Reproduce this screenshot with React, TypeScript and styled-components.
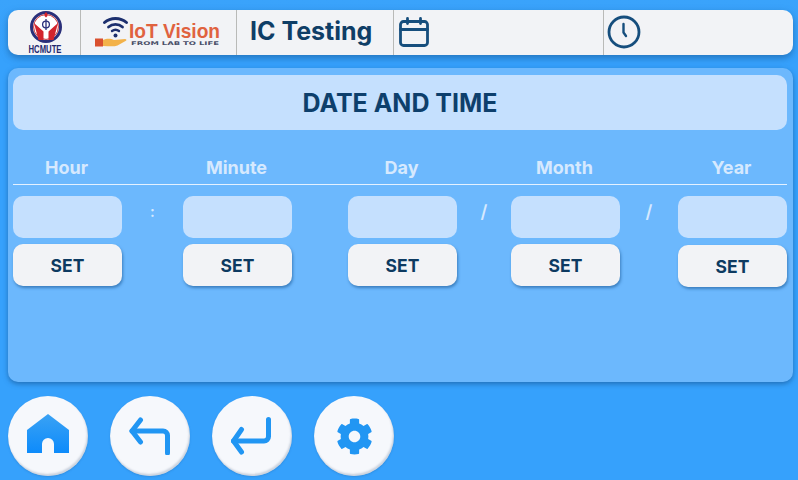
import React from "react";
import styled, { createGlobalStyle } from "styled-components";
import { FaCog } from "react-icons/fa";

const GlobalStyle = createGlobalStyle`
  html, body {
    margin: 0;
    padding: 0;
    background: #36a1fc;
    font-family: "Inter", "Liberation Sans", sans-serif;
  }
  * { box-sizing: border-box; }
`;

const fields = [
  { label: "Hour", sep: ":" },
  { label: "Minute", sep: "" },
  { label: "Day", sep: "/" },
  { label: "Month", sep: "/" },
  { label: "Year", sep: "" },
];

const HcmuteLogo = () => (
  <svg width="54" height="45" viewBox="-8 0 54 45">
    <circle cx="19" cy="17" r="14.500" fill="#fff" stroke="#2a2f7a" strokeWidth="3" />
    <circle cx="19" cy="17" r="12.400" fill="none" stroke="#c9343a" strokeWidth="1" />
    <path d="M7 13l9.500 8.500V30h-5zM31 13l-9.500 8.500V30h5z" fill="#d3242c" />
    <circle cx="19" cy="14.500" r="3.400" fill="none" stroke="#2a2f7a" strokeWidth="1.300" />
    <path d="M19 9v11" stroke="#2a2f7a" strokeWidth="1.300" />
    <path d="M19 2c-2.200 2-2.200 4 0 5.500 2.200-1.500 2.200-3.500 0-5.500z" fill="#d3242c" />
    <text x="18" y="42.500" textAnchor="middle" fontFamily="Liberation Sans, sans-serif" fontWeight="700" fontSize="10.500" textLength="33" lengthAdjust="spacingAndGlyphs" fill="#23286e">
      HCMUTE
    </text>
  </svg>
);

const IotLogo = () => (
  <svg width="148" height="36" viewBox="-10 0 148 36">
    <g fill="none" stroke="#1c2f6e" strokeLinecap="round">
      <path d="M9.500 7.500C15.500 2 25.500 2 31.500 7.500" strokeWidth="3" />
      <path d="M13.500 12c4-3.500 10-3.500 14 0" strokeWidth="2.800" />
      <path d="M17 16c2-1.500 5-1.500 7 0" strokeWidth="2.400" />
    </g>
    <circle cx="20.500" cy="20.500" r="2" fill="#1c2f6e" />
    <rect x="0" y="23.500" width="8" height="8" fill="#d9502f" />
    <path d="M8 25c4-2 8-1.500 11 0l11-1c1.500 0 2 1.500 .500 2l-8 4.500c-4 1.500-9 .500-14.500 .500z" fill="#f3b24a" />
    <text x="34" y="22.500" fontFamily="Liberation Sans, sans-serif" fontWeight="700" fontSize="20.500" textLength="91" lengthAdjust="spacingAndGlyphs" fill="#e0623f">
      IoT Vision
    </text>
    <text x="36" y="29.500" fontFamily="DejaVu Sans, sans-serif" fontWeight="700" fontSize="5" textLength="88" lengthAdjust="spacingAndGlyphs" fill="#4a4f68">
      FROM LAB TO LIFE
    </text>
  </svg>
);

const CalendarIcon = () => (
  <svg width="32" height="32" viewBox="0 0 32 32" fill="none" stroke="#164e7d" strokeWidth="2.800" strokeLinecap="round" strokeLinejoin="round">
    <rect x="2.500" y="5.500" width="27" height="24" rx="3" />
    <path d="M2.500 13.500h27M9.500 2.500v5M22.500 2.500v5" />
  </svg>
);

const ClockIcon = () => (
  <svg width="34" height="34" viewBox="0 0 34 34" fill="none" stroke="#164e7d" strokeLinecap="round" strokeLinejoin="round">
    <circle cx="17" cy="17" r="15" strokeWidth="2.800" />
    <path d="M16.500 9v8.500l2.500 3.500" strokeWidth="2.400" />
  </svg>
);

const HomeIcon = () => (
  <svg width="42" height="44" viewBox="0 0 42 44">
    <defs>
      <linearGradient id="homeFill" x1="0" y1="0" x2="0" y2="1">
        <stop offset="0" stopColor="#3aa2f4" />
        <stop offset="1" stopColor="#0d8bfb" />
      </linearGradient>
    </defs>
    <path d="M21 0L42 16v23H27V30a6 6 0 0 0-12 0v9H0V16z" fill="url(#homeFill)" />
  </svg>
);

const BackIcon = () => (
  <svg width="42" height="38" viewBox="0 0 42 38" fill="none" stroke="#2196f3" strokeWidth="5" strokeLinecap="round" strokeLinejoin="round">
    <path d="M11.500 3L3 14l8.500 11" />
    <path d="M3 14h31a4.500 4.500 0 0 1 4.500 4.500V36" />
  </svg>
);

const EnterIcon = () => (
  <svg width="42" height="38" viewBox="0 0 42 38" fill="none" stroke="#2196f3" strokeWidth="5" strokeLinecap="round" strokeLinejoin="round">
    <path d="M10.500 12.500L2.500 24l8 11" />
    <path d="M2.500 24H33a4.500 4.500 0 0 0 4.500-4.500V2.500" />
  </svg>
);

export default function App() {
  return (
    <Screen>
      <GlobalStyle />
      <Header>
        <HeaderCell $width={73} $center $pad={3}>
          <HcmuteLogo />
        </HeaderCell>
        <HeaderCell $width={156} $center>
          <IotLogo />
        </HeaderCell>
        <HeaderCell $width={157} $pad={13} $lift={4}>
          <HeaderTitle>IC Testing</HeaderTitle>
        </HeaderCell>
        <HeaderCell $width={210} $pad={4} $lift={2}>
          <CalendarIcon />
        </HeaderCell>
        <HeaderCell $width={189} $pad={3} $lift={2} $last>
          <ClockIcon />
        </HeaderCell>
      </Header>

      <Panel>
        <TitleBar>DATE AND TIME</TitleBar>
        <FieldGrid>
          {fields.map((f, i) => (
            <FieldLabel key={f.label} $col={i * 2 + 1}>{f.label}</FieldLabel>
          ))}
          <Divider />
          {fields.map((f, i) => (
            <React.Fragment key={f.label}>
              <ValueBox $col={i * 2 + 1} />
              {f.sep && <Separator $col={i * 2 + 2} $small={f.sep === ":"}>{f.sep}</Separator>}
              <SetButton $col={i * 2 + 1} $nudge={i === 4}>SET</SetButton>
            </React.Fragment>
          ))}
        </FieldGrid>
      </Panel>

      <Footer>
        <RoundButton><HomeIcon /></RoundButton>
        <RoundButton><BackIcon /></RoundButton>
        <RoundButton><EnterIcon /></RoundButton>
        <RoundButton><GearIcon /></RoundButton>
      </Footer>
    </Screen>
  );
}

const Screen = styled.div`
  width: 798px;
  height: 480px;
  padding: 10px 5px 4px 8px;
  overflow: hidden;
  background: linear-gradient(#3aa3fb, #36a1fc 60px);
`;
const Header = styled.div`
  display: flex;
  height: 45px;
  background: #f2f3f6;
  border-radius: 10px;
  box-shadow: 0 3px 7px rgba(20, 80, 140, 0.55);
`;
const HeaderCell = styled.div<{ $width: number; $center?: boolean; $pad?: number; $lift?: number; $last?: boolean }>`
  flex: 0 0 ${(p) => p.$width}px;
  display: flex;
  align-items: center;
  justify-content: ${(p) => (p.$center ? "center" : "flex-start")};
  padding-left: ${(p) => p.$pad ?? 0}px;
  padding-bottom: ${(p) => p.$lift ?? 0}px;
  border-right: ${(p) => (p.$last ? "none" : "1px solid #b9bab8")};
`;
const HeaderTitle = styled.span`
  font-size: 25px;
  font-weight: 700;
  color: #0f3e66;
  white-space: nowrap;
`;
const Panel = styled.div`
  height: 314px;
  margin-top: 13px;
  padding: 7px 6px 7px 5px;
  background: #6cb8fd;
  border-radius: 10px;
  box-shadow: 0 2px 5px rgba(20, 80, 140, 0.6);
`;
const TitleBar = styled.div`
  height: 55px;
  display: flex;
  align-items: center;
  justify-content: center;
  padding-top: 1px;
  background: #c5e0fe;
  border-radius: 10px;
  font-size: 25px;
  font-weight: 700;
  color: #0d3f6c;
`;
const FieldGrid = styled.div`
  display: grid;
  grid-template-columns: 109px 61px 109px 56px 109px 54px 109px 58px 109px;
  grid-template-rows: 24px 5px 42px 42px;
  margin-top: 26px;
`;
const FieldLabel = styled.div<{ $col: number }>`
  grid-column: ${(p) => p.$col};
  grid-row: 1;
  padding-right: 2px;
  text-align: center;
  font-size: 18px;
  line-height: 24px;
  font-weight: 700;
  color: #d6e9fe;
`;
const Divider = styled.div`
  grid-column: 1 / -1;
  grid-row: 2;
  align-self: end;
  height: 1px;
  background: #e4f1ff;
`;
const ValueBox = styled.div<{ $col: number }>`
  grid-column: ${(p) => p.$col};
  grid-row: 3;
  height: 42px;
  margin-top: 11px;
  background: #c5e0fe;
  border-radius: 10px;
`;
const Separator = styled.div<{ $col: number; $small?: boolean }>`
  grid-column: ${(p) => p.$col};
  grid-row: 3;
  margin-top: 11px;
  display: flex;
  align-items: center;
  justify-content: center;
  font-size: ${(p) => (p.$small ? 15 : 18)}px;
  font-weight: 600;
  color: #d6e9fe;
`;
const SetButton = styled.button<{ $col: number; $nudge?: boolean }>`
  grid-column: ${(p) => p.$col};
  grid-row: 4;
  height: 42px;
  margin-top: ${(p) => (p.$nudge ? 18 : 17)}px;
  border: none;
  padding: 0;
  background: #f2f3f6;
  border-radius: 10px;
  box-shadow: 1px 2px 3px rgba(20, 80, 140, 0.55);
  font-family: inherit;
  font-size: 17.500px;
  font-weight: 700;
  color: #0d3a61;
`;
const Footer = styled.div`
  display: flex;
  gap: 22px;
  margin-top: 14px;
`;
const RoundButton = styled.div`
  width: 80px;
  height: 80px;
  display: flex;
  align-items: center;
  justify-content: center;
  background: #f6f8fc;
  border-radius: 50%;
  box-shadow: inset -1px -2px 2px rgba(150, 165, 185, 0.45), 0 1px 2px rgba(30, 100, 170, 0.3);
`;
const GearIcon = styled(FaCog)`
  width: 37px;
  height: 37px;
  color: #2196f3;
`;
